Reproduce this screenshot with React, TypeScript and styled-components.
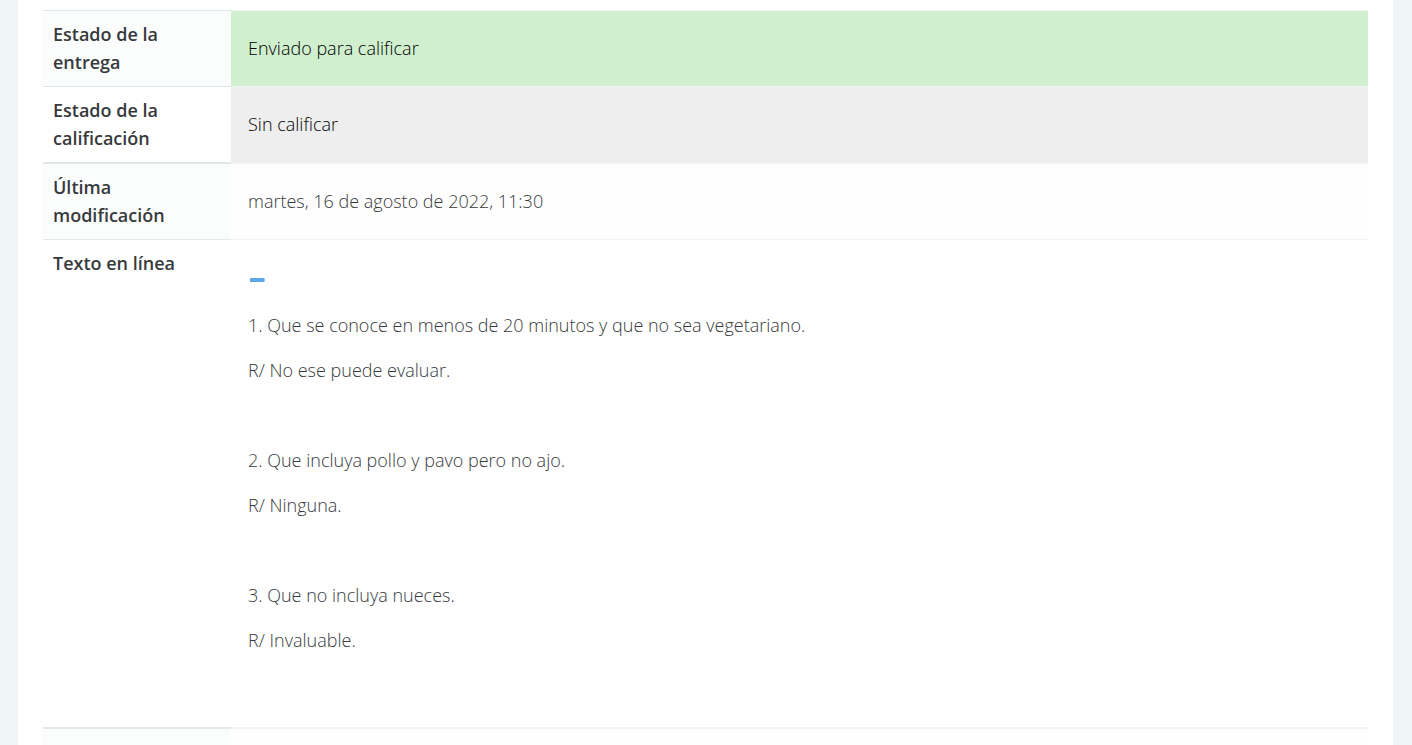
import React from "react";
import styled, { createGlobalStyle } from "styled-components";

const GlobalStyle = createGlobalStyle`
  * { box-sizing: border-box; }
  body {
    margin: 0;
    background: #eff4f5;
    color: #373a3c;
    font-family: "Open Sans", sans-serif;
    font-size: 18px;
    font-weight: 330;
    line-height: 28px;
  }
`;

const Page = styled.div`
  min-height: 100vh;
  padding: 0 19px 0 18px;
  display: flex;
`;

const Panel = styled.main`
  flex: 1;
  background: #fff;
  padding: 10px 25px 0;
`;

const StatusTable = styled.table`
  width: 100%;
  border-collapse: separate;
  border-spacing: 0;
  table-layout: fixed;
`;

const Label = styled.th<{ $striped?: boolean; $line?: number }>`
  width: 188px;
  padding: 9px 10px 10px;
  border-top: ${(p) => p.$line ?? 1}px solid #e2e8ea;
  background: ${(p) => (p.$striped ? "#fbfdfc" : "#fff")};
  font-weight: 630;
  text-align: left;
  vertical-align: top;
`;

const fills = {
  submitted: "#cfefcf",
  pending: "#eeeeee",
  striped: "#fefefe",
  plain: "#ffffff",
};

const Value = styled.td<{ $tone?: keyof typeof fills; $line?: number }>`
  padding: 9px 17px 10px;
  border-top: ${(p) => p.$line ?? 1}px solid #eff4f4;
  background: ${(p) => fills[p.$tone ?? "plain"]};
  color: ${(p) => (p.$tone === "submitted" || p.$tone === "pending" ? "#000" : "inherit")};
  vertical-align: middle;
`;

const OnlineText = styled.div`
  padding: 17px 0 1px;
`;

const Paragraph = styled.p`
  min-height: 28px;
  margin: 0 0 17px;
`;

const CollapseButton = styled.button`
  display: flex;
  align-items: center;
  width: 18px;
  height: 28px;
  margin: 0 0 17px;
  padding: 0 0 0 2px;
  border: 0;
  background: none;
  cursor: pointer;
`;

const answers = [
  "1. Que se conoce en menos de 20 minutos y que no sea vegetariano.",
  "R/ No ese puede evaluar.",
  "",
  "2. Que incluya pollo y pavo pero no ajo.",
  "R/ Ninguna.",
  "",
  "3. Que no incluya nueces.",
  "R/ Invaluable.",
  "",
];

export default function App() {
  return (
    <>
      <GlobalStyle />
      <Page>
        <Panel>
          <StatusTable>
            <tbody>
              <tr>
                <Label scope="row" $striped>Estado de la entrega</Label>
                <Value $tone="submitted">Enviado para calificar</Value>
              </tr>
              <tr>
                <Label scope="row">Estado de la calificación</Label>
                <Value $tone="pending">Sin calificar</Value>
              </tr>
              <tr>
                <Label scope="row" $striped $line={2}>Última modificación</Label>
                <Value $tone="striped" $line={2}>martes, 16 de agosto de 2022, 11:30</Value>
              </tr>
              <tr>
                <Label scope="row">Texto en línea</Label>
                <Value>
                  <OnlineText>
                    <CollapseButton type="button" aria-label="Contraer">
                      <svg width="15" height="4" viewBox="0 0 15 4" aria-hidden="true">
                        <rect width="14.6" height="4" rx="0.6" fill="#5ea5ea" />
                      </svg>
                    </CollapseButton>
                    {answers.map((text, i) => (
                      <Paragraph key={i}>{text}</Paragraph>
                    ))}
                  </OnlineText>
                </Value>
              </tr>
              <tr>
                <Label as="td" $striped $line={2} />
                <Value $tone="striped" $line={2} />
              </tr>
            </tbody>
          </StatusTable>
        </Panel>
      </Page>
    </>
  );
}
